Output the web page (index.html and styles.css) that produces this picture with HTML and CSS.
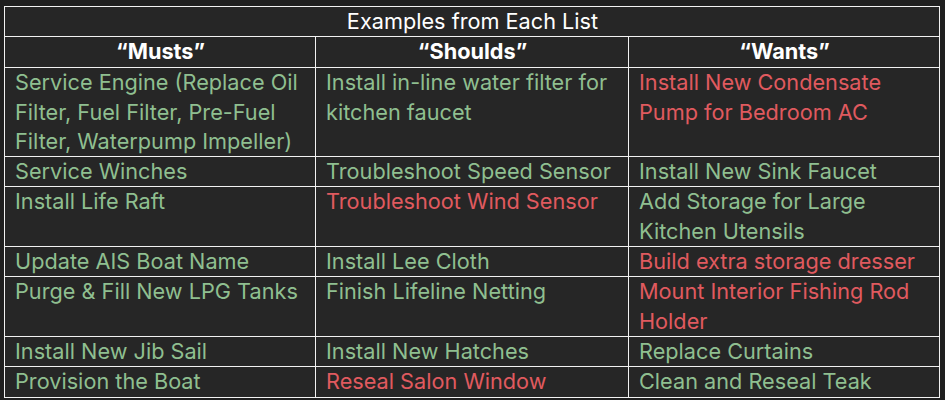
FILE: index.html
```html
<!DOCTYPE html>
<html>
<head>
<meta charset="utf-8">
<link rel="stylesheet" href="styles.css">
</head>
<body>
<table class="lists">
  <colgroup><col class="c1"><col class="c2"><col class="c3"></colgroup>
  <thead>
    <tr><th colspan="3" class="title">Examples from Each List</th></tr>
    <tr class="head"><th>“Musts”</th><th>“Shoulds”</th><th>“Wants”</th></tr>
  </thead>
  <tbody>
    <tr><td class="g">Service Engine (Replace Oil Filter, Fuel Filter, Pre-Fuel Filter, Waterpump Impeller)</td><td class="g">Install in-line water filter for kitchen faucet</td><td class="r">Install New Condensate Pump for Bedroom AC</td></tr>
    <tr><td class="g">Service Winches</td><td class="g">Troubleshoot Speed Sensor</td><td class="g">Install New Sink Faucet</td></tr>
    <tr><td class="g">Install Life Raft</td><td class="r">Troubleshoot Wind Sensor</td><td class="g">Add Storage for Large Kitchen Utensils</td></tr>
    <tr><td class="g">Update AIS Boat Name</td><td class="g">Install Lee Cloth</td><td class="r">Build extra storage dresser</td></tr>
    <tr><td class="g">Purge &amp; Fill New LPG Tanks</td><td class="g">Finish Lifeline Netting</td><td class="r">Mount Interior Fishing Rod Holder</td></tr>
    <tr><td class="g">Install New Jib Sail</td><td class="g">Install New Hatches</td><td class="g">Replace Curtains</td></tr>
    <tr><td class="g">Provision the Boat</td><td class="r">Reseal Salon Window</td><td class="g">Clean and Reseal Teak</td></tr>
  </tbody>
</table>
</body>
</html>
```
FILE: styles.css
```css
html, body {
  margin: 0;
  background: #1f1f1f;
}
body {
  padding: 6px 6px 0 4px;
  font-family: Inter, "Noto Sans", sans-serif;
}
.lists {
  border-collapse: collapse;
  width: 935px;
  table-layout: fixed;
  background: #262626;
}
.c1 { width: 311px; }
.c2 { width: 313px; }
.c3 { width: 311px; }
.lists th, .lists td {
  border: 1.5px solid #f2f2f2;
  padding: 0 9px 0 10px;
  font-size: 21.7px;
  line-height: 29.3px;
  vertical-align: top;
  text-align: left;
}
.lists th {
  color: #ffffff;
  text-align: center;
  font-weight: 700;
}
.lists th.title {
  font-weight: 400;
  height: 29px;
}
.head th { height: 30px; }
.g { color: #8fbf90; }
.r { color: #e05a5f; }
```
